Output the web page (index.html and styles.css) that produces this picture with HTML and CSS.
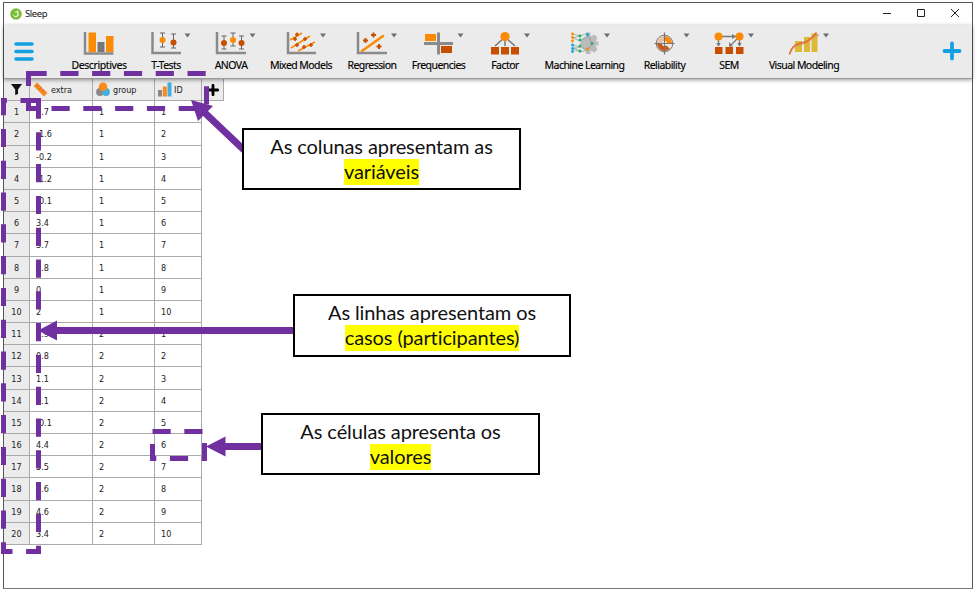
FILE: index.html
```
<!DOCTYPE html>
<html lang="pt">
<head>
<meta charset="utf-8">
<title>Sleep</title>
<link rel="stylesheet" href="styles.css">
</head>
<body>
<div class="window">
  <header class="titlebar">
    <svg class="logo" width="12" height="12" viewBox="0 0 12 12"><circle cx="6" cy="6" r="5.8" fill="#78bd35"/><path d="M7.500 2.500v4.200a2 2 0 0 1-4 0M5 4h4M5 8.800c2.500 0 4-1 4-3" fill="none" stroke="#e6f5d5" stroke-width="1"/></svg>
    <span class="title">Sleep</span>
    <svg class="controls" width="90" height="22" viewBox="0 0 90 22"><path d="M4 11.500h8M38.500 7.500h7v7h-7zM72 7l8 8M80 7l-8 8" fill="none" stroke="#222" stroke-width="1"/></svg>
  </header>
  <nav class="toolbar">
    <svg class="menu" width="20" height="20" viewBox="0 0 20 20"><path d="M2 2h16M2 9.500h16M2 17h16" stroke="#14a1e3" stroke-width="3.600" stroke-linecap="round"/></svg>
    <div class="items">
      <div class="item"><svg viewBox="0 0 50 26"><path d="M11 2v21.500h28.500" fill="none" stroke="#8a8a8a" stroke-width="2.500"/><path d="M14.500 2.500h7.500v19.500h-7.500zM32 6h7.500v16h-7.500z" fill="#fb8b05"/><path d="M23.500 12h7v10h-7z" fill="#777"/></svg><span>Descriptives</span></div>
      <div class="item"><svg viewBox="0 0 50 26"><path d="M11.500 2v21h28.500" fill="none" stroke="#8a8a8a" stroke-width="2.500"/><path d="M21.500 3v14M32.500 4v14M19 3h5M19 17h5M30 4h5M30 18h5" stroke="#666"/><circle cx="21.500" cy="10" r="3" fill="#fb8b05"/><circle cx="32.500" cy="12.500" r="3" fill="#c84e00"/><path class="drop" d="M43.500 3.500h6l-3 4z"/></svg><span>T-Tests</span></div>
      <div class="item"><svg viewBox="0 0 50 26"><path d="M11 2v21h29" fill="none" stroke="#8a8a8a" stroke-width="2.500"/><path d="M18 6v13M27 3v13M35.500 6v13M15.500 6h5M15.500 19h5M24.500 3h5M24.500 16h5M33 6h5M33 19h5" stroke="#666"/><circle cx="18" cy="13" r="3" fill="#c84e00"/><circle cx="27" cy="10" r="3" fill="#fb8b05"/><circle cx="35.500" cy="13" r="3" fill="#c84e00"/><path class="drop" d="M43.500 3.500h6l-3 4z"/></svg><span>ANOVA</span></div>
      <div class="item"><svg viewBox="0 0 50 26"><path d="M12 2v21h28" fill="none" stroke="#8a8a8a" stroke-width="2.500"/><path d="M14 10L26 3M15 18L34 6M22 21l17-9" stroke="#fb8b05" stroke-width="1.600"/><path d="M19 4.500h4M21 2.500v4M17 9h4M19 7v4M27 9h4M29 7v4M19 15h4M21 13v4M26 17h4M28 15v4M33 15h4M35 13v4" stroke="#c84e00" stroke-width="1.600"/><path class="drop" d="M44 3.500h6l-3 4z"/></svg><span>Mixed Models</span></div>
      <div class="item"><svg viewBox="0 0 50 26"><path d="M11 2v21h29" fill="none" stroke="#8a8a8a" stroke-width="2.500"/><path d="M15 21L36 6" stroke="#fb8b05" stroke-width="2.600" stroke-linecap="round"/><path d="M16 10.500h5M18.500 8v5M24 5h5M26.500 2.500v5M29.500 16.500h5M32 14v5" stroke="#c84e00" stroke-width="2"/><path class="drop" d="M44 3.500h6l-3 4z"/></svg><span>Regression</span></div>
      <div class="item"><svg viewBox="0 0 50 26"><path d="M10 13.500h29M24.500 2.500v22" stroke="#8a8a8a" stroke-width="3"/><path d="M11 4h11v7h-11z" fill="#fb8b05"/><path d="M27 16h11v7h-11z" fill="#c84e00"/><path class="drop" d="M43.500 3.500h6l-3 4z"/></svg><span>Frequencies</span></div>
      <div class="item"><svg viewBox="0 0 50 26"><path d="M24 8L15 16M25 8v8M26 8l9 8" stroke="#777" stroke-width="1.500"/><path d="M11 17h8v7.500h-8zM21 17h8v7.500h-8zM31 17h8v7.500h-8z" fill="#c84e00"/><circle cx="25" cy="6.500" r="4.600" fill="#fb8b05"/><path class="drop" d="M44 3.500h6l-3 4z"/></svg><span>Factor</span></div>
      <div class="item"><svg viewBox="0 0 50 26"><path d="M26 2.500h4.500v4l4-2 3 3-2 4h3v4h-3l2 4-3 3-4-2v3.500h-4.500z" fill="#bbb"/><circle cx="28" cy="13.500" r="7.500" fill="#bbb"/><path d="M13 4l7 2-7 2 7 3M13 15l7 2-7 2 7 3-7-6M20 6l8-3M20 11l8-5M20 17l8 3M20 22l8-2" stroke="#8da9a0" stroke-width=".8" fill="none"/><path d="M28 5l4 8.500-4 6" fill="none" stroke="#999"/><g fill="#fb8b05"><circle cx="12.500" cy="4" r="1.400"/><circle cx="12.500" cy="7.500" r="1.400"/><circle cx="12.500" cy="11" r="1.400"/><circle cx="27.500" cy="19" r="1.400"/></g><g fill="#12a7db"><circle cx="12.500" cy="15" r="1.400"/><circle cx="12.500" cy="18.500" r="1.400"/><circle cx="12.500" cy="21.500" r="1.400"/><circle cx="27.500" cy="4.500" r="1.400"/></g><g fill="#1fb35c"><circle cx="20" cy="6" r="1.400"/><circle cx="20" cy="10" r="1.400"/><circle cx="20" cy="16" r="1.400"/><circle cx="20" cy="21" r="1.400"/><circle cx="32" cy="13.500" r="1.400"/></g><path class="drop" d="M44 3.500h6l-3 4z"/></svg><span>Machine Learning</span></div>
      <div class="item"><svg viewBox="0 0 50 26"><circle cx="24.500" cy="13.500" r="8.300" fill="#f3e8df" stroke="#777"/><path d="M24.500 13.500V6a7.500 7.500 0 0 1 7.500 7.500z" fill="#fb8b05"/><path d="M24.500 13.500V6a7.500 7.500 0 0 0-7.500 7.500z" fill="#e9c3a8"/><path d="M24.500 13.500V21a7.500 7.500 0 0 1-7.500-7.500zM24.500 13.500V21a7.500 7.500 0 0 0 5.300-2.200z" fill="#c85a18"/><circle cx="24.500" cy="13.500" r="2.600" fill="#eee"/><path d="M24.500 2.500v22M14.500 13.500h20" stroke="#777" stroke-width="1.200"/><path class="drop" d="M43.500 3.500h6l-3 4z"/></svg><span>Reliability</span></div>
      <div class="item"><svg viewBox="0 0 50 26"><path d="M18 6.500h16M14.500 10v6M35.500 10v6M33 9l-7 7" stroke="#777" stroke-width="1.300"/><path d="M28 4l4 2.500-4 2.500zM12.300 13h4.400l-2.200 3.500zM33.300 13h4.400l-2.200 3.500zM25 12v4.500h4z" fill="#777"/><circle cx="14.500" cy="6.500" r="4" fill="#fb8b05"/><circle cx="35.500" cy="6.500" r="4" fill="#fb8b05"/><path d="M11 17h7.500v7h-7.500zM21.500 17h7.500v7h-7.500zM32 17h7.500v7h-7.500z" fill="#c84e00"/><path class="drop" d="M44 3.500h6l-3 4z"/></svg><span>SEM</span></div>
      <div class="item"><svg viewBox="0 0 50 26"><path d="M16 11h7v11h-7zM25 7h6v15h-6zM32.500 3.500h6v18.500h-6z" fill="#dcb936"/><path d="M10.500 24c5-13 12-7 19-13S36 5 40 5" fill="none" stroke="#c77c69" stroke-width="2" opacity=".5"/><path d="M10.500 24.500C14 10 23 15 29 10.500c4-3 6-4.500 8.500-8" fill="none" stroke="#e96724" stroke-width="1.300"/><path class="drop" d="M44 3.500h6l-3 4z"/></svg><span>Visual Modeling</span></div>
    </div>
    <svg class="add" width="20" height="20" viewBox="0 0 20 20"><path d="M10 2.500v15M2.500 10h15" stroke="#14a1e3" stroke-width="3.800" stroke-linecap="round"/></svg>
  </nav>
  <main class="sheet">
    <table>
      <colgroup><col class="c-num"><col class="c-extra"><col class="c-group"><col class="c-id"><col class="c-plus"></colgroup>
      <thead><tr>
        <th><svg class="funnel" width="11" height="11" viewBox="0 0 11 11"><path d="M0 0h11L7 5.500V10L4.200 11V5.500z" fill="#111"/></svg></th>
        <th><div class="head"><svg width="15" height="15" viewBox="0 0 15 15"><path d="M4 .5L14.500 11l-3.500 3.500L.5 4z" fill="#f58a25"/><path d="M5.500 3L4 4.500M8 5.500L6 7.500M10.500 8L9 9.500" stroke="#b96212" stroke-width=".8"/></svg><span>extra</span></div></th>
        <th><div class="head"><svg width="14" height="15" viewBox="0 0 14 15"><circle cx="4" cy="10" r="3.900" fill="#888"/><circle cx="10" cy="10" r="3.900" fill="#42aee0"/><circle cx="7" cy="4.800" r="4.300" fill="#fb8b16"/></svg><span>group</span></div></th>
        <th><div class="head tight"><svg width="14" height="15" viewBox="0 0 14 15"><path d="M0 8h4v6.500H0z" fill="#888"/><path d="M4.800 4.500h4v10h-4z" fill="#fb8b16"/><path d="M9.500 .5h4v14h-4z" fill="#42aee0"/></svg><span>ID</span></div></th>
        <th class="plus"><svg width="12" height="12" viewBox="0 0 12 12"><path d="M6 1.300v9.400M1.300 6h9.400" stroke="#000" stroke-width="2.800" stroke-linecap="round"/></svg></th>
      </tr></thead>
      <tbody>
        <tr><th>1</th><td>0.7</td><td>1</td><td>1</td></tr>
        <tr><th>2</th><td>-1.6</td><td>1</td><td>2</td></tr>
        <tr><th>3</th><td>-0.2</td><td>1</td><td>3</td></tr>
        <tr><th>4</th><td>-1.2</td><td>1</td><td>4</td></tr>
        <tr><th>5</th><td>-0.1</td><td>1</td><td>5</td></tr>
        <tr><th>6</th><td>3.4</td><td>1</td><td>6</td></tr>
        <tr><th>7</th><td>3.7</td><td>1</td><td>7</td></tr>
        <tr><th>8</th><td>0.8</td><td>1</td><td>8</td></tr>
        <tr><th>9</th><td>0</td><td>1</td><td>9</td></tr>
        <tr><th>10</th><td>2</td><td>1</td><td>10</td></tr>
        <tr><th>11</th><td>1.9</td><td>2</td><td>1</td></tr>
        <tr><th>12</th><td>0.8</td><td>2</td><td>2</td></tr>
        <tr><th>13</th><td>1.1</td><td>2</td><td>3</td></tr>
        <tr><th>14</th><td>0.1</td><td>2</td><td>4</td></tr>
        <tr><th>15</th><td>-0.1</td><td>2</td><td>5</td></tr>
        <tr><th>16</th><td>4.4</td><td>2</td><td>6</td></tr>
        <tr><th>17</th><td>5.5</td><td>2</td><td>7</td></tr>
        <tr><th>18</th><td>1.6</td><td>2</td><td>8</td></tr>
        <tr><th>19</th><td>4.6</td><td>2</td><td>9</td></tr>
        <tr><th>20</th><td>3.4</td><td>2</td><td>10</td></tr>
      </tbody>
    </table>
  </main>
</div>
<svg class="marks" width="977" height="593" viewBox="0 0 977 593">
  <g fill="none" stroke="#7030a0" stroke-width="5" stroke-dasharray="18.200 13.600">
    <path d="M28.500 73.500H206.500V108.500H28.500z"/>
    <path d="M38.500 100.500V551.500H3.500V100.500z"/>
    <path d="M152.500 431.500H204.500V458.500H152.500z"/>
  </g>
  <g stroke="#7030a0" stroke-width="7"><path d="M244 150L205 113M294 330.500H54M262 446.500H222"/></g>
  <path d="M191 100L213 106L198 121zM38 330.500L57 320.500V340.500zM206 446.500L225.500 436.500V456.500z" fill="#7030a0"/>
</svg>
<p class="callout columns">As colunas apresentam as<br><mark>variáveis</mark></p>
<p class="callout rows">As linhas apresentam os<br><mark>casos (participantes)</mark></p>
<p class="callout cells">As células apresenta os<br><mark>valores</mark></p>
</body>
</html>
```
FILE: styles.css
```
* { box-sizing: border-box; }
body { margin: 0; width: 977px; height: 593px; overflow: hidden; background: #fff; position: relative; padding: 2px 4px 4px 3px; }
.window { width: 970px; height: 587px; border: 1px solid #555; border-bottom-color: #777; background: #fff; font-family: "DejaVu Sans Condensed", "DejaVu Sans", sans-serif; }
.titlebar { height: 22px; display: flex; align-items: center; padding-left: 6px; }
.title { font: 9.5px/12px "Noto Sans", sans-serif; letter-spacing: -.4px; color: #111; margin-left: 3px; }
.controls { margin-left: auto; margin-right: 3px; margin-top: -2px; width: 90px; }
.toolbar { height: 54px; display: flex; align-items: flex-start; background: #ebebeb; border-bottom: 1px solid #999; box-shadow: 0 1px 4px rgba(0,0,0,.4); position: relative; }
.menu { margin: 17px 0 0 10px; }
.items { display: grid; grid-template-columns: 66px 68px 62px 78px 64px 69px 64px 95px 65px 64px 86px; margin-left: 32px; padding-top: 5px; }
.item { display: flex; flex-direction: column; align-items: center; }
.item svg { width: 50px; height: 26px; }
.item span { font: 10.5px/14px "Noto Sans", sans-serif; color: #000; white-space: nowrap; margin-top: 2px; letter-spacing: -.55px; -webkit-text-stroke: .15px #000; }
.item:first-child span { letter-spacing: -.4px; }
.drop { fill: #667078; }
.add { margin: 16px 10px 0 auto; }
table { border-collapse: separate; border-spacing: 0; table-layout: fixed; width: 220px; font-size: 9px; color: #222; }
.c-num { width: 26px; } .c-extra { width: 63px; } .c-group { width: 62px; } .c-id { width: 47px; } .c-plus { width: 22px; }
th, td { padding: 0; height: 22.2px; line-height: 14px; border-right: 1px solid #aaa; border-bottom: 1px solid #aaa; }
td { text-align: left; padding-left: 6px; background: #fff; }
tbody th, tbody td { padding-top: 1px; }
th { font-weight: normal; background: #ececec; text-align: center; }
.head { display: flex; align-items: center; padding-left: 3px; gap: 3px; }
.head.tight { gap: 2px; }
.plus svg, .funnel { display: block; margin: auto; }
.marks { position: absolute; left: 0; top: 0; }
.callout { position: absolute; margin: 0; border: 2px solid #000; background: #fff; text-align: center; font: 20px/25px Lato, sans-serif; letter-spacing: -.1px; font-variant-ligatures: none; color: #111; padding-top: 4px; height: 62px; width: 279px; white-space: nowrap; }
.callout mark { background: #ff0; color: inherit; padding: 0 0 2px; }
.columns { left: 242px; top: 128px; }
.rows { left: 293px; top: 294px; height: 63px; width: 278px; }
.cells { left: 261px; top: 413px; }
```
